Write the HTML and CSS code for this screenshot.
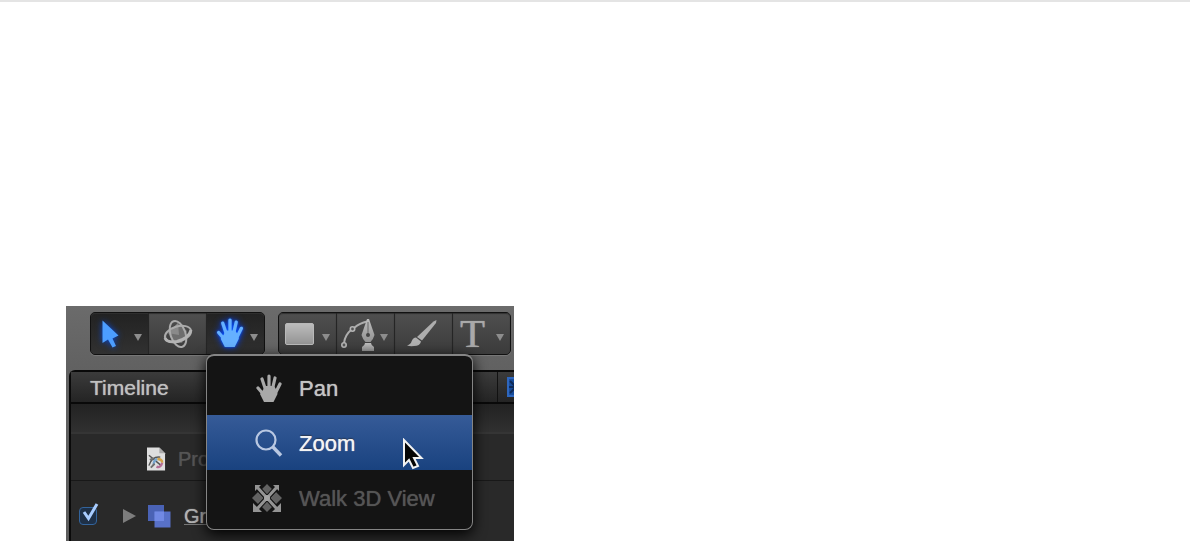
FILE: index.html
```html
<!DOCTYPE html>
<html lang="en">
<head>
  <meta charset="UTF-8">
  <meta name="viewport" content="width=device-width, initial-scale=1.0">
  <title>Zoom tool</title>
  <link rel="stylesheet" href="styles.css">
</head>
<body>
  <!-- Shared shapes -->
  <svg class="defs" aria-hidden="true">
    <defs>
      <linearGradient id="metal" x1="0" y1="0" x2="0" y2="1">
        <stop offset="0" stop-color="#bdbdbd"/>
        <stop offset="1" stop-color="#939393"/>
      </linearGradient>
      <symbol id="hand" viewBox="0 0 26 28">
        <path d="M2 14L8 21M6 5L10 17M13 2V17M19 4L16 17M24 10L19 20" fill="none" stroke="currentColor" stroke-width="3.200" stroke-linecap="round"/>
        <path d="M7 16L9 12H18L20.500 16L21.500 20L17.500 28H8L4 20z" fill="currentColor"/>
      </symbol>
      <symbol id="caret" viewBox="0 0 8 7">
        <path d="M0 0H8L4 7z" fill="#8d8d8d"/>
      </symbol>
    </defs>
  </svg>

  <main class="app">
    <div class="toolbar">
      <div class="group">
        <button class="tool active" aria-label="Select">
          <svg viewBox="0 0 57 41"><path class="glow" d="M11.500 7.500V30L17 26.500L21.500 34.500L25 33L21.500 25.500L27.500 22.500z" fill="#4c9dff"/><use href="#caret" x="43" y="21" width="8" height="7"/></svg>
        </button>
        <button class="tool" aria-label="3D transform">
          <svg viewBox="0 0 57 41">
            <path d="M19 20L29 10L38 18L33 30L25 29z" fill="#6e6e6e"/>
            <path d="M19 20L29 10L30 22z" fill="#8a8a8a"/>
            <g fill="none" stroke="#ababab" stroke-width="2">
              <ellipse cx="29" cy="21" rx="13.500" ry="7.500" transform="rotate(-17 29 21)"/>
              <ellipse cx="29" cy="21" rx="7.500" ry="13.500" transform="rotate(-19 29 21)"/>
            </g>
            <path d="M16 25Q18 30 28 28.500Q40 25 42 17" fill="none" stroke="#b4b4b4" stroke-width="3"/>
          </svg>
        </button>
        <button class="tool active" aria-label="Pan and zoom" aria-haspopup="menu" aria-expanded="true">
          <svg viewBox="0 0 57 41"><use class="glow hand-on" href="#hand" x="9" y="5" width="28" height="29"/><use href="#caret" x="43" y="21" width="8" height="7"/></svg>
        </button>
      </div>
      <div class="group">
        <button class="tool" aria-label="Rectangle">
          <svg viewBox="0 0 57 41"><rect x="6.500" y="10.500" width="28" height="21" rx="1.500" fill="url(#metal)" stroke="#b9b9b9"/><use href="#caret" x="43" y="21" width="8" height="7"/></svg>
        </button>
        <button class="tool" aria-label="Bezier">
          <svg viewBox="0 0 57 41">
            <path d="M7 30Q8 22 14 17M17 15Q23 10 30 8.500" fill="none" stroke="#adadad" stroke-width="2"/>
            <g fill="#555" stroke="#b4b4b4" stroke-width="1.600"><circle cx="7" cy="32" r="2.200"/><circle cx="15.500" cy="16" r="2.200"/></g>
            <path d="M30 6H32L37.500 22Q36 27 33.500 29H28.500Q26 27 24.500 22z" fill="url(#metal)"/>
            <path d="M31 9V22" stroke="#666"/>
            <circle cx="31" cy="22" r="2" fill="#444"/>
            <path d="M28 30H34Q34 32 37 34V38H25V34Q28 32 28 30z" fill="url(#metal)"/>
            <use href="#caret" x="43" y="21" width="8" height="7"/>
          </svg>
        </button>
        <button class="tool" aria-label="Paint stroke">
          <svg viewBox="0 0 57 41">
            <path d="M41.500 7L41 10L27 27.500L22 24L38.500 8.500z" fill="#adadad"/>
            <path d="M21 24.500L26 28.500Q25 33 19 33Q15 33.500 12 32.500Q16 31 16.500 28.500Q18 24.500 21 24.500z" fill="#b0b0b0"/>
          </svg>
        </button>
        <button class="tool" aria-label="Text">
          <span class="letter">T</span>
          <svg class="letter-caret" viewBox="0 0 8 7"><use href="#caret" width="8" height="7"/></svg>
        </button>
      </div>

      <div class="menu" role="menu">
        <button class="item" role="menuitem">
          <svg viewBox="0 0 32 32"><use href="#hand" x="4" y="1" width="26" height="28"/></svg>
          Pan
        </button>
        <button class="item selected" role="menuitem">
          <svg viewBox="0 0 32 32"><circle cx="14" cy="12" r="9.500" fill="none" stroke="#b9c8e2" stroke-width="2.200"/><path d="M20.500 18.500L29 27.500" stroke="#b9c8e2" stroke-width="3.400"/></svg>
          Zoom
        </button>
        <button class="item" role="menuitem" disabled>
          <svg viewBox="0 0 32 32">
            <path d="M15 1L21 7L15 13L9 7zM15 17L21 23L15 29L9 23zM6 9L12 15L6 21L0 15zM24 9L30 15L24 21L18 15z" fill="#626262"/>
            <path d="M5 4L25 26M25 4L5 26" stroke="#141414" stroke-width="5"/>
            <path d="M5 4L25 26M25 4L5 26" stroke="#949494" stroke-width="3"/>
            <path d="M3 2H9L3 8zM27 2H21L27 8zM1 29V20L10 29zM29 29V20L20 29z" fill="#949494"/>
            <circle cx="15" cy="15" r="3" fill="#a5a5a5"/>
          </svg>
          Walk 3D View
        </button>
        <svg class="pointer" viewBox="0 0 22 32"><path d="M2 2V27L7 22L11 30L16 28L12 20H19.500z" fill="#050505" stroke="#f2f2f2" stroke-width="2"/></svg>
      </div>
    </div>

    <section class="panel">
      <header class="head">
        <h2>Timeline</h2>
        <button class="snap" aria-label="Show layers">
          <svg viewBox="0 0 18 20"><rect x="1" y="1" width="17" height="18" fill="#184d9c" stroke="#2e66bd" stroke-width="2"/><path d="M3 4L15 16M3 16L15 4M2 10H16" stroke="#102b58" stroke-width="2"/></svg>
        </button>
      </header>
      <div class="ruler"></div>
      <div class="row project">
        <svg class="doc" viewBox="0 0 20 24">
          <path d="M0 0H13L19 6V24H0z" fill="#dedede"/>
          <path d="M13 0V6H19z" fill="#a8a8a8"/>
          <path d="M2 8L15 19M2 19Q5 9 14 10" fill="none" stroke="#555" stroke-width="1.500"/>
          <g fill="none" stroke-width="2.500"><path d="M7 18Q7 13 11 12" stroke="#78a6cf"/><path d="M11 12Q16 12 16 16" stroke="#d2a348"/><path d="M16 16Q14 22 10 20" stroke="#b66e96"/></g>
          <path d="M3 13L7 11M4 21L8 17" stroke="#707070" stroke-width="2"/>
        </svg>
        <span>Project</span>
      </div>
      <div class="row layer">
        <label class="check">
          <input type="checkbox" checked aria-label="Group visible">
          <svg viewBox="0 0 20 24"><path d="M5 11L9.500 17.500L18 3" fill="none" stroke="#a9cdff" stroke-width="3"/></svg>
        </label>
        <button class="disclose" aria-label="Expand group"><svg viewBox="0 0 14 14"><path d="M0 0L13 7L0 14z" fill="#7d7d7d"/></svg></button>
        <svg class="stack" viewBox="0 0 23 23"><rect width="16" height="16" fill="#4a62b5"/><rect x="6.500" y="6.500" width="16" height="16" fill="#5871c8"/><rect x="6.500" y="6.500" width="9.500" height="9.500" fill="#7189e4"/></svg>
        <span>Group</span>
      </div>
    </section>
  </main>
</body>
</html>
```

FILE: styles.css
```css
body {
  margin: 0;
  background: #fff;
  border-top: 2px solid #e4e4e4;
  font-family: "Liberation Sans", Arial, sans-serif;
}
.defs {
  position: absolute;
  width: 0;
  height: 0;
}
button {
  padding: 0;
  border: 0;
  background: none;
  font: inherit;
  color: inherit;
}
svg {
  display: block;
  flex: none;
}

/* Application window, cropped at the right and bottom */
.app {
  max-width: 448px;
  height: 235px;
  margin: 304px 66px 0;
  overflow: hidden;
  background: linear-gradient(#6b6b6b, #616161 64px, #5c5c5c);
}

/* Toolbar */
.toolbar {
  position: relative;
  display: flex;
  gap: 13px;
  padding: 6px 0 15px 24px;
}
.group {
  display: flex;
  flex: none;
  gap: 1px;
  border: 1px solid #111;
  border-radius: 5px;
  background: #252525;
  box-shadow: 0 1px 0 #777;
}
.tool {
  display: flex;
  align-items: center;
  width: 57px;
  height: 41px;
  background: linear-gradient(#4f4f4f, #3b3b3b);
  box-shadow: inset 0 1px 1px #303030;
}
.tool:first-child {
  border-radius: 4px 0 0 4px;
}
.tool:last-child {
  border-radius: 0 4px 4px 0;
}
.tool.active {
  background: linear-gradient(#222, #313131);
}
.glow {
  filter: drop-shadow(0 0 3px #0648dd);
}
.hand-on {
  color: #65b0ff;
  filter: drop-shadow(0 0 1px #0b5cff) drop-shadow(0 0 3px #0040ff);
}
.letter {
  padding-left: 7px;
  font-family: "Liberation Serif", serif;
  font-size: 41px;
  line-height: 41px;
  color: #a9a9a9;
  text-shadow: 0 0 1px #a9a9a9;
}
.letter-caret {
  width: 8px;
  height: 7px;
  margin: 8px 0 0 11px;
}

/* Popup menu */
.menu {
  position: absolute;
  z-index: 1;
  top: 48px;
  left: 140px;
  width: 265px;
  border: 2px solid #858585;
  border-width: 2px 1px 1px;
  border-radius: 8px;
  background: #141414;
  box-shadow: 0 4px 14px #000;
  color: #c4c4c4;
  font-size: 22px;
}
.item {
  display: flex;
  align-items: center;
  gap: 15px;
  width: 100%;
  height: 59px;
  padding-top: 6px;
  padding-left: 45px;
  text-align: left;
  text-shadow: 0 0 1px currentColor;
}
.item svg {
  width: 32px;
  height: 32px;
  color: #a9a9a9;
}
.item.selected {
  height: 55px;
  padding-top: 2px;
  background: linear-gradient(#365b98, #19427f);
  color: #f4f4f4;
  text-shadow: 0 0 1px currentColor, 0 -1px 1px #12223f;
}
.item:disabled {
  padding: 0 0 2px 45px;
  color: #555;
}
.pointer {
  position: absolute;
  top: 82px;
  left: 195px;
  width: 22px;
  height: 32px;
}

/* Timeline panel */
.panel {
  margin-left: 3px;
  border: solid #090909;
  border-width: 2px 0 0 2px;
  border-radius: 6px 0 0 0;
  background: #292929;
}
.head {
  display: flex;
  align-items: center;
  justify-content: space-between;
  height: 30px;
  padding-left: 19px;
  border-bottom: 2px solid #090909;
  background: linear-gradient(#3b3b3b, #242424);
}
.head h2 {
  margin: 2px 0 0;
  font-size: 21px;
  font-weight: normal;
  color: #c0c0c0;
  text-shadow: 0 0 1px currentColor;
}
.snap {
  width: 17px;
  height: 30px;
  padding-left: 9px;
  border-left: 1px solid #111;
  overflow: hidden;
}
.snap svg {
  width: 18px;
  height: 20px;
}
.ruler {
  height: 28px;
  border-bottom: 2px solid #353535;
  background: linear-gradient(#222, #303030);
}
.row {
  display: flex;
  align-items: center;
  font-size: 20px;
  text-shadow: 0 0 1px currentColor;
}
.project {
  height: 47px;
  gap: 12px;
  padding: 4px 0 0 76px;
  box-sizing: border-box;
  border-bottom: 1px solid #181818;
  color: #555;
}
.doc {
  width: 19px;
  height: 24px;
}
.layer {
  height: 70px;
  padding-left: 8px;
  color: #b2b2b2;
}
.layer span {
  margin-left: 13px;
  text-decoration: underline 1px #777;
}
.check {
  position: relative;
}
.check input {
  display: block;
  appearance: none;
  width: 18px;
  height: 18px;
  margin: 0;
  border: 1px solid #33649c;
  border-radius: 4px;
  background: #1e3047;
}
.check svg {
  position: absolute;
  left: 0;
  bottom: 0;
  width: 20px;
  height: 24px;
}
.disclose {
  margin-left: 26px;
}
.disclose svg {
  width: 14px;
  height: 14px;
}
.stack {
  width: 23px;
  height: 23px;
  margin-left: 11px;
}
```
